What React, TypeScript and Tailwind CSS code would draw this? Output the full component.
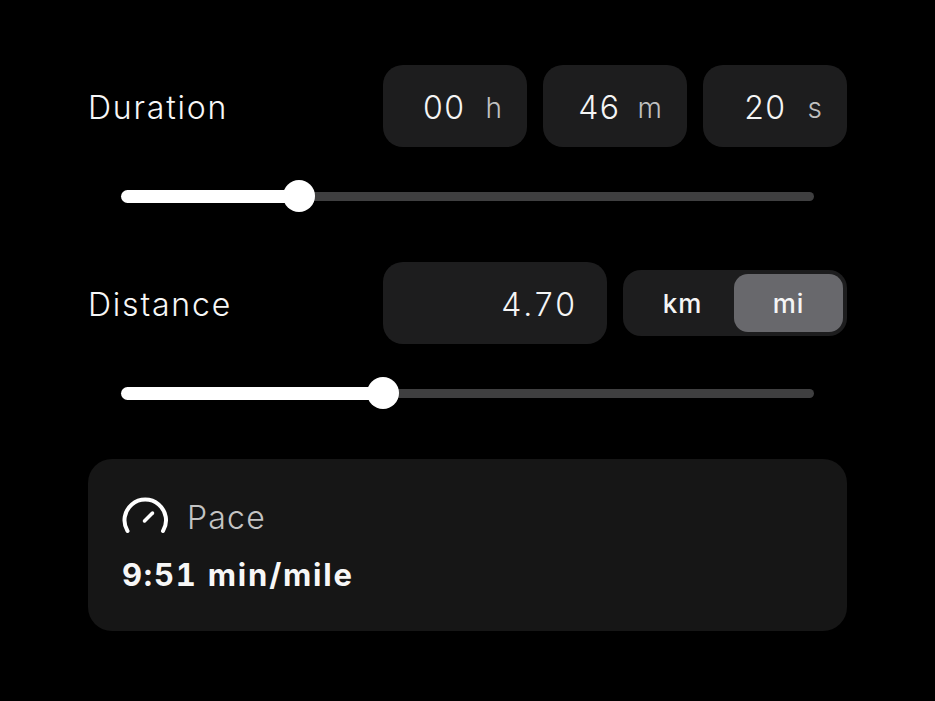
const labelFont = "font-['Inter','Liberation_Sans',sans-serif]";

function TimeBox({ value, unit, gap }: { value: string; unit: string; gap: string }) {
  return (
    <div className="w-[144px] h-[82px] rounded-[20px] bg-[#1d1d1e] flex items-center justify-end pt-[4px] pr-[25px]">
      <span className="text-[32px] font-light tracking-[1.5px] text-[#f5f5f5]">{value}</span>
      <span className={`${gap} text-[28px] font-light text-[#c0c0c0]`}>{unit}</span>
    </div>
  );
}

function Slider({ fill }: { fill: number }) {
  return (
    <div className="h-[32px] mx-[33px] flex items-center">
      <div className="h-[13px] rounded-l-full bg-white" style={{ width: fill }} />
      <div className="w-[32px] h-[32px] -mx-[16px] z-10 shrink-0 rounded-full bg-white" />
      <div className="flex-1 h-[9px] rounded-r-full bg-[#3f3f40]" />
    </div>
  );
}

export default function App() {
  return (
    <div className={`w-[935px] h-[701px] bg-black px-[88px] pt-[65px] overflow-hidden ${labelFont}`}>
      {/* Duration */}
      <div className="flex items-center justify-between h-[82px]">
        <span className="pt-[4px] text-[32px] font-light tracking-[1.8px] text-[#f7f7f7]">Duration</span>
        <div className="flex gap-[16px]">
          <TimeBox value="00" unit="h" gap="ml-[20px]" />
          <TimeBox value="46" unit="m" gap="ml-[17px]" />
          <TimeBox value="20" unit="s" gap="ml-[21px]" />
        </div>
      </div>
      <div className="mt-[33px]">
        <Slider fill={178} />
      </div>

      {/* Distance */}
      <div className="mt-[50px] flex items-center justify-between h-[82px]">
        <span className="pt-[4px] text-[32px] font-light tracking-[1.8px] text-[#f7f7f7]">Distance</span>
        <div className="flex items-center gap-[16px]">
          <div className="w-[224px] h-[82px] rounded-[20px] bg-[#1d1d1e] flex items-center justify-end pt-[4px] pr-[29px]">
            <span className="text-[32px] font-light tracking-[3px] text-[#f5f5f5]">4.70</span>
          </div>
          <div className="w-[224px] h-[66px] rounded-[18px] bg-[#1d1d1e] p-[4px] flex">
            <div className="flex-1 flex items-center justify-center pl-[4px] text-[26px] font-medium tracking-[1px] text-[#f5f5f5]">km</div>
            <div className="w-[109px] rounded-[14px] bg-[#68686c] flex items-center justify-center text-[26px] font-medium tracking-[1px] text-[#f5f5f5]">
              mi
            </div>
          </div>
        </div>
      </div>
      <div className="mt-[33px]">
        <Slider fill={262} />
      </div>

      {/* Pace */}
      <div className="mt-[50px] h-[172px] rounded-[24px] bg-[#161616] px-[34px] pt-[36px]">
        <div className="flex items-center gap-[17px] h-[44px]">
          <svg width="48" height="40" viewBox="0 0 48 40" fill="none" className="shrink-0">
            <path
              d="M5.5 34A20.75 20.75 0 1 1 41 34"
              stroke="white"
              strokeWidth="4"
              strokeLinecap="round"
            />
            <path d="M22.5 24L30.5 16" stroke="white" strokeWidth="3.5" strokeLinecap="round" />
          </svg>
          <span className="pt-[2px] text-[32px] font-light tracking-[1.2px] text-[#c4c4c4]">Pace</span>
        </div>
        <div className="mt-[14px] text-[31px] font-bold tabular-nums tracking-[1.8px] text-[#f7f7f7] leading-[44px]">
          9:51 min/mile
        </div>
      </div>
    </div>
  );
}
